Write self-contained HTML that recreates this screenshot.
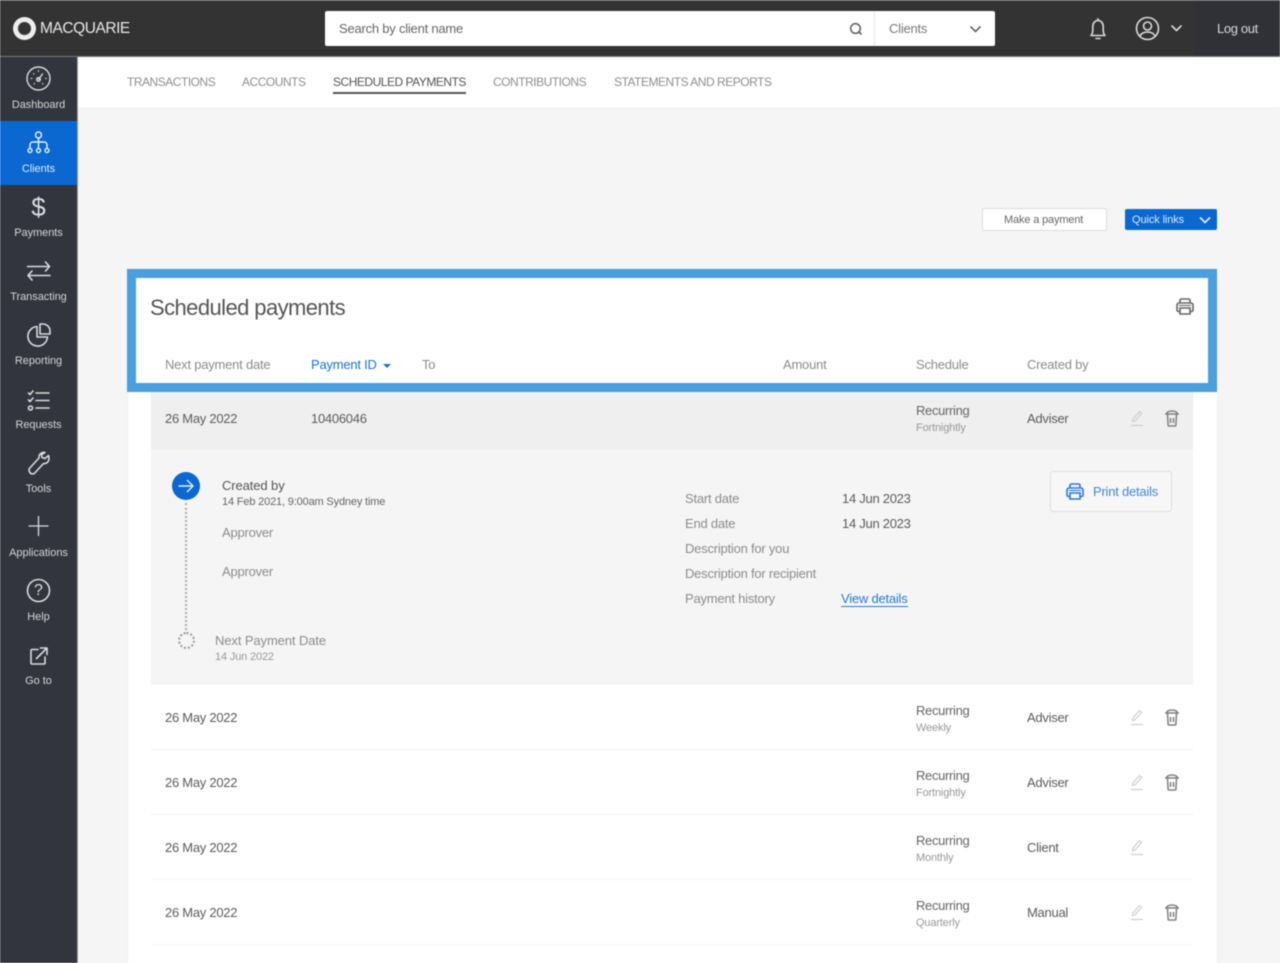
<!DOCTYPE html>
<html lang="en">
<head>
<meta charset="utf-8">
<title>Scheduled payments</title>
<style>
html,body{margin:0;padding:0;width:1280px;height:963px;overflow:hidden;background:#f5f5f5}
#p{position:relative;width:1280px;height:963px;overflow:hidden;font-family:"Liberation Sans",Arial,sans-serif;font-size:13px;color:#555;filter:blur(.55px);background:#f5f5f5}
.a{position:absolute}
.t{position:absolute;white-space:nowrap;line-height:16px;letter-spacing:-.22px}
.g{color:#8c8c8c}
.d{color:#5c5c5c;letter-spacing:-.27px}
.s{font-size:11px;color:#999;letter-spacing:-.15px}
.n{font-size:12px;color:#8f8f8f;letter-spacing:-.48px;top:74px}
.m{position:absolute;left:0;width:77px;text-align:center;font-size:11px;line-height:14px;color:#d4d5d8;letter-spacing:-.05px}
svg{position:absolute;overflow:visible;fill:none}
.w{stroke:#d9dadc;stroke-width:1.6;stroke-linecap:round;stroke-linejoin:round}
.line{position:absolute;left:151px;width:1042px;height:1px;background:#f1f1f1}
.r{letter-spacing:-.33px;color:#666}
</style>
</head>
<body>
<div id="p">
<!-- header -->
<div class="a" style="left:0;top:0;width:1280px;height:57px;background:#333;border-top:1px solid #555;box-sizing:border-box;border-bottom:1px solid #777"></div>
<div class="a" style="left:1195px;top:1px;width:85px;height:55px;background:#2f3136"></div>
<div class="a" style="left:13px;top:17px;width:23px;height:23px;border-radius:50%;background:radial-gradient(circle at 50% 50%,#333 0 6px,#eee 7px)"></div>
<div class="t" style="left:40px;top:21px;font-size:15.5px;color:#e8e8e8;letter-spacing:-.45px">MACQUARIE</div>
<!-- search -->
<div class="a" style="left:325px;top:11px;width:670px;height:35px;background:#fff;border-radius:2px"></div>
<div class="t" style="left:339px;top:21px;color:#666">Search by client name</div>
<svg style="left:849px;top:22px" width="14" height="14" viewBox="0 0 14 14"><circle cx="6.5" cy="6.5" r="4.8" stroke="#666" stroke-width="1.6"/><path d="M10 10l2.500 2.500" stroke="#666" stroke-width="1.6"/></svg>
<div class="a" style="left:874px;top:11px;width:1px;height:35px;background:#e6e6e6"></div>
<div class="t" style="left:889px;top:21px;color:#777">Clients</div>
<svg style="left:969px;top:25px" width="13" height="8" viewBox="0 0 13 8"><path d="M1.500 1.500l5 5 5-5" stroke="#555" stroke-width="1.5"/></svg>
<!-- bell, user -->
<svg class="w" style="left:1088px;top:17px" width="20" height="24" viewBox="0 0 20 24"><path d="M3 18.500c1.500-1.500 1.800-3 1.800-5.500V9.500C4.800 6 7 3.500 10 3.500s5.200 2.500 5.200 6V13c0 2.500.3 4 1.800 5.500zM8 21.500h4M10 3.500V1.800"/></svg>
<svg class="w" style="left:1135px;top:16px" width="25" height="25" viewBox="0 0 25 25"><circle cx="12.500" cy="12.500" r="11"/><circle cx="12.500" cy="10" r="4"/><path d="M5 20c1.500-3 4-4 7.500-4s6 1 7.500 4"/></svg>
<svg class="w" style="left:1171px;top:25px" width="11" height="7" viewBox="0 0 11 7"><path d="M1 1l4.500 4.500L10 1"/></svg>
<div class="t" style="left:1217px;top:21px;color:#d8d8d8;letter-spacing:-.35px">Log out</div>
<!-- sidebar -->
<div class="a" style="left:0;top:57px;width:77px;height:906px;background:#32353e"></div>
<div class="a" style="left:77px;top:57px;width:1px;height:906px;background:#9a9a9a"></div>
<div class="a" style="left:0;top:121px;width:77px;height:64px;background:#0a68d0"></div>
<svg style="left:26px;top:66px;stroke:#d9dadc;stroke-width:1.400;stroke-linecap:round" width="25" height="25" viewBox="0 0 25 25"><circle cx="12.500" cy="12.500" r="11.500"/><path d="M12.500 13.500l4-5.500"/><circle cx="12.500" cy="13.500" r="1.800"/><path d="M5 12.500h1M19.500 12.500h1M7.500 7.500l.6.6M12.500 4.500v1M8 18l.6-.6M17 18l-.6-.6" stroke-width="1"/></svg>
<div class="m" style="top:98px">Dashboard</div>
<svg style="left:27px;top:131px;stroke:#e6f0fb;stroke-width:1.400" width="24" height="24" viewBox="0 0 24 24"><circle cx="11.500" cy="4" r="3"/><path d="M11.500 7v4M3 17v-3c0-1.500 1-3 3-3h11c2 0 3 1.500 3 3v3M11.500 11v6"/><circle cx="3" cy="19.500" r="2"/><circle cx="11.500" cy="19.500" r="2"/><circle cx="20" cy="19.500" r="2"/></svg>
<div class="m" style="top:162px;color:#dbe9f9">Clients</div>
<div class="t" style="left:28px;top:193px;width:21px;text-align:center;font-size:26px;line-height:28px;color:#dcdcdc;font-weight:400;letter-spacing:0">$</div>
<div class="m" style="top:226px">Payments</div>
<svg class="w" style="left:27px;top:261px" width="24" height="20" viewBox="0 0 24 20"><path d="M0.500 5.500H22.500M18.500 1l4 4.500-4 4.500M23 14.500H1M5 10l-4 4.500L5 19"/></svg>
<div class="m" style="top:290px">Transacting</div>
<svg class="w" style="left:27px;top:323px" width="24" height="24" viewBox="0 0 24 24"><path d="M10 3.500a9.800 9.800 0 1 0 10.500 10.500H10z"/><path d="M13 1h3a7 7 0 0 1 7 7v3H13z"/></svg>
<div class="m" style="top:354px">Reporting</div>
<svg class="w" style="left:27px;top:390px" width="24" height="22" viewBox="0 0 24 22"><path d="M1.500 3l1.500 1.500L6 1M1.500 10l1.500 1.500L6 8M9 3h13M9 10.500h13M9 18h13"/><circle cx="3.500" cy="18" r="2"/></svg>
<div class="m" style="top:418px">Requests</div>
<svg class="w" style="left:28px;top:452px" width="22" height="23" viewBox="0 0 22 23"><path d="M20.500 3.500l-3.500 3-3-1-.5-3L17 .5c-3-.8-6.500 1.500-6 5.500L1.800 16c-1.500 1.800-.5 4 .5 5s3.200 1.500 4.500 0L15.500 11.500c4 .5 6.500-3 5-8z"/></svg>
<div class="m" style="top:482px">Tools</div>
<svg class="w" style="left:29px;top:516px;stroke-width:1.300" width="20" height="20" viewBox="0 0 20 20"><path d="M9.500 .5v19M0 10h19"/></svg>
<div class="m" style="top:546px">Applications</div>
<svg class="w" style="left:27px;top:579px" width="24" height="24" viewBox="0 0 24 24"><circle cx="11.500" cy="11.500" r="11"/></svg>
<div class="t" style="left:27px;top:583px;width:23px;text-align:center;font-size:16px;color:#dcdcdc;letter-spacing:0">?</div>
<div class="m" style="top:610px">Help</div>
<svg class="w" style="left:30px;top:647px" width="18" height="18" viewBox="0 0 18 18"><path d="M8 2.500H2a1 1 0 0 0-1 1V16a1 1 0 0 0 1 1h12a1 1 0 0 0 1-1v-6M6.500 11.500L16.500 1.500M10.500 1h6.500v6.500"/></svg>
<div class="m" style="top:674px">Go to</div>
<!-- nav -->
<div class="a" style="left:78px;top:57px;width:1202px;height:50px;background:#fff"></div>
<div class="t n" style="left:127px">TRANSACTIONS</div>
<div class="t n" style="left:242px">ACCOUNTS</div>
<div class="t n" style="left:333px;color:#555">SCHEDULED PAYMENTS</div>
<div class="a" style="left:333px;top:92px;width:133px;height:2px;background:#555"></div>
<div class="t n" style="left:493px">CONTRIBUTIONS</div>
<div class="t n" style="left:614px">STATEMENTS AND REPORTS</div>
<!-- buttons -->
<div class="a" style="left:982px;top:208px;width:125px;height:23px;box-sizing:border-box;background:#fff;border:1px solid #ddd;border-radius:2px"></div>
<div class="t" style="left:1004px;top:212px;font-size:11px;color:#666;letter-spacing:-.15px">Make a payment</div>
<div class="a" style="left:1125px;top:209px;width:92px;height:21px;background:#0a68d0;border-radius:2px"></div>
<div class="t" style="left:1132px;top:212px;font-size:11px;color:#dbe9f9;letter-spacing:-.1px">Quick links</div>
<svg style="left:1199px;top:216px" width="12" height="8" viewBox="0 0 12 8"><path d="M1 1.500l5 5 5-5" stroke="#e6f0fb" stroke-width="1.600"/></svg>
<!-- card -->
<div class="a" style="left:128px;top:269px;width:1089px;height:694px;background:#fff;box-shadow:0 0 0 1px #f0f0f0"></div>
<div class="a" style="left:127px;top:269px;width:1090px;height:123px;box-sizing:border-box;border:9px solid #4a9fdc;background:#fff"></div>
<div class="t" style="left:150px;top:295px;font-size:22px;line-height:26px;color:#555;letter-spacing:-.58px">Scheduled payments</div>
<svg style="left:1176px;top:298px" width="18" height="18" viewBox="0 0 18 18"><path d="M4 5V2.500c0-1 .5-1.500 1.500-1.500h7c1 0 1.500.5 1.500 1.500V5M4 13.500H2.500A1.500 1.500 0 0 1 1 12V7c0-1 1-2 2-2h12c1 0 2 1 2 2v5c0 .8-.7 1.500-1.500 1.500H14" stroke="#666" stroke-width="1.600"/><path d="M4 10h10v6H4z" stroke="#666" stroke-width="1.600"/><path d="M3 7.500h12" stroke="#666"/></svg>
<div class="t g" style="left:165px;top:357px">Next payment date</div>
<div class="t" style="left:311px;top:357px;color:#1a72d6">Payment ID</div>
<div class="a" style="left:383px;top:364px;width:0;height:0;border:4px solid transparent;border-top:4px solid #1a72d6"></div>
<div class="t g" style="left:422px;top:357px">To</div>
<div class="t g" style="left:783px;top:357px">Amount</div>
<div class="t g" style="left:916px;top:357px">Schedule</div>
<div class="t g" style="left:1027px;top:357px">Created by</div>
<!-- first row -->
<div class="a" style="left:151px;top:392px;width:1042px;height:58px;background:#efefef"></div>
<div class="t d" style="left:165px;top:411px">26 May 2022</div>
<div class="t d" style="left:311px;top:411px">10406046</div>
<div class="t r" style="left:916px;top:403px">Recurring</div>
<div class="t s" style="left:916px;top:420px">Fortnightly</div>
<div class="t d" style="left:1027px;top:411px">Adviser</div>
<svg style="left:1130px;top:410px" width="14" height="17" viewBox="0 0 14 17"><path d="M2.500 11.500l.5-2.500 6.500-7.500 2 1.800L5 11z" stroke="#ccc" stroke-width="1.100"/><path d="M1 15.500h12" stroke="#ccc" stroke-width="1.100"/></svg>
<svg style="left:1165px;top:410px" width="14" height="17" viewBox="0 0 14 17"><path d="M1 4c1-2 3-3 6-3s5 1 6 3zM2.500 4.500l.6 10.500c0 .6.400 1 1 1h5.800c.6 0 1-.4 1-1l.6-10.500M5.500 8v5M8.500 8v5" stroke="#808080" stroke-width="1.500"/></svg>
<!-- detail -->
<div class="a" style="left:151px;top:450px;width:1042px;height:235px;background:#f5f5f5"></div>
<div class="a" style="left:172px;top:472px;width:28px;height:28px;border-radius:50%;background:#0a68d0"></div>
<svg style="left:178px;top:479px" width="16" height="14" viewBox="0 0 16 14"><path d="M.5 7h14M9 1l6 6-6 6" stroke="#e6f0fb" stroke-width="1.400"/></svg>
<div class="a" style="left:185px;top:503px;width:0;height:127px;border-left:2px dotted #aaa"></div>
<div class="a" style="left:178px;top:632px;width:13px;height:13px;border:2px dotted #999;border-radius:50%"></div>
<div class="t" style="left:222px;top:478px;color:#555;letter-spacing:-.1px">Created by</div>
<div class="t" style="left:222px;top:494px;font-size:11px;color:#666;letter-spacing:-.16px">14 Feb 2021, 9:00am Sydney time</div>
<div class="t g" style="left:222px;top:525px">Approver</div>
<div class="t g" style="left:222px;top:564px">Approver</div>
<div class="t g" style="left:215px;top:633px;letter-spacing:-.1px">Next Payment Date</div>
<div class="t s" style="left:215px;top:649px">14 Jun 2022</div>
<div class="t g" style="left:685px;top:491px">Start date</div>
<div class="t d" style="left:842px;top:491px">14 Jun 2023</div>
<div class="t g" style="left:685px;top:516px">End date</div>
<div class="t d" style="left:842px;top:516px">14 Jun 2023</div>
<div class="t g" style="left:685px;top:541px">Description for you</div>
<div class="t g" style="left:685px;top:566px">Description for recipient</div>
<div class="t g" style="left:685px;top:591px">Payment history</div>
<div class="t" style="left:841px;top:591px;color:#2a7ad8;border-bottom:1px solid #2a7ad8;line-height:14px;padding-top:1px">View details</div>
<div class="a" style="left:1050px;top:471px;width:122px;height:41px;box-sizing:border-box;border:1px solid #ddd;border-radius:3px;background:#f7f7f7"></div>
<svg style="left:1066px;top:483px" width="18" height="18" viewBox="0 0 18 18"><path d="M4 5V2.500c0-1 .5-1.500 1.500-1.500h7c1 0 1.500.5 1.500 1.500V5M4 13.500H2.500A1.500 1.500 0 0 1 1 12V7c0-1 1-2 2-2h12c1 0 2 1 2 2v5c0 .8-.7 1.500-1.500 1.500H14" stroke="#2a7ad8" stroke-width="1.600"/><path d="M4 10h10v6H4z" stroke="#2a7ad8" stroke-width="1.600"/><path d="M3 7.500h12" stroke="#2a7ad8"/></svg>
<div class="t" style="left:1093px;top:484px;color:#3f88dc">Print details</div>
<!-- rows -->
<div class="t d" style="left:165px;top:710px">26 May 2022</div>
<div class="t r" style="left:916px;top:703px">Recurring</div>
<div class="t s" style="left:916px;top:720px">Weekly</div>
<div class="t d" style="left:1027px;top:710px">Adviser</div>
<svg style="left:1130px;top:709px" width="14" height="17" viewBox="0 0 14 17"><path d="M2.500 11.500l.5-2.500 6.500-7.500 2 1.800L5 11z" stroke="#ccc" stroke-width="1.100"/><path d="M1 15.500h12" stroke="#ccc" stroke-width="1.100"/></svg>
<svg style="left:1165px;top:709px" width="14" height="17" viewBox="0 0 14 17"><path d="M1 4c1-2 3-3 6-3s5 1 6 3zM2.500 4.500l.6 10.500c0 .6.400 1 1 1h5.800c.6 0 1-.4 1-1l.6-10.500M5.500 8v5M8.500 8v5" stroke="#808080" stroke-width="1.500"/></svg>
<div class="line" style="top:749px"></div>
<div class="t d" style="left:165px;top:775px">26 May 2022</div>
<div class="t r" style="left:916px;top:768px">Recurring</div>
<div class="t s" style="left:916px;top:785px">Fortnightly</div>
<div class="t d" style="left:1027px;top:775px">Adviser</div>
<svg style="left:1130px;top:774px" width="14" height="17" viewBox="0 0 14 17"><path d="M2.500 11.500l.5-2.500 6.500-7.500 2 1.800L5 11z" stroke="#ccc" stroke-width="1.100"/><path d="M1 15.500h12" stroke="#ccc" stroke-width="1.100"/></svg>
<svg style="left:1165px;top:774px" width="14" height="17" viewBox="0 0 14 17"><path d="M1 4c1-2 3-3 6-3s5 1 6 3zM2.500 4.500l.6 10.500c0 .6.400 1 1 1h5.800c.6 0 1-.4 1-1l.6-10.500M5.500 8v5M8.500 8v5" stroke="#808080" stroke-width="1.500"/></svg>
<div class="line" style="top:814px"></div>
<div class="t d" style="left:165px;top:840px">26 May 2022</div>
<div class="t r" style="left:916px;top:833px">Recurring</div>
<div class="t s" style="left:916px;top:850px">Monthly</div>
<div class="t d" style="left:1027px;top:840px">Client</div>
<svg style="left:1130px;top:839px" width="14" height="17" viewBox="0 0 14 17"><path d="M2.500 11.500l.5-2.500 6.500-7.500 2 1.800L5 11z" stroke="#ccc" stroke-width="1.100"/><path d="M1 15.500h12" stroke="#ccc" stroke-width="1.100"/></svg>
<div class="line" style="top:879px"></div>
<div class="t d" style="left:165px;top:905px">26 May 2022</div>
<div class="t r" style="left:916px;top:898px">Recurring</div>
<div class="t s" style="left:916px;top:915px">Quarterly</div>
<div class="t d" style="left:1027px;top:905px">Manual</div>
<svg style="left:1130px;top:904px" width="14" height="17" viewBox="0 0 14 17"><path d="M2.500 11.500l.5-2.500 6.500-7.500 2 1.800L5 11z" stroke="#ccc" stroke-width="1.100"/><path d="M1 15.500h12" stroke="#ccc" stroke-width="1.100"/></svg>
<svg style="left:1165px;top:904px" width="14" height="17" viewBox="0 0 14 17"><path d="M1 4c1-2 3-3 6-3s5 1 6 3zM2.500 4.500l.6 10.500c0 .6.400 1 1 1h5.800c.6 0 1-.4 1-1l.6-10.500M5.500 8v5M8.500 8v5" stroke="#808080" stroke-width="1.500"/></svg>
<div class="line" style="top:944px"></div>
</div>
</body>
</html>
